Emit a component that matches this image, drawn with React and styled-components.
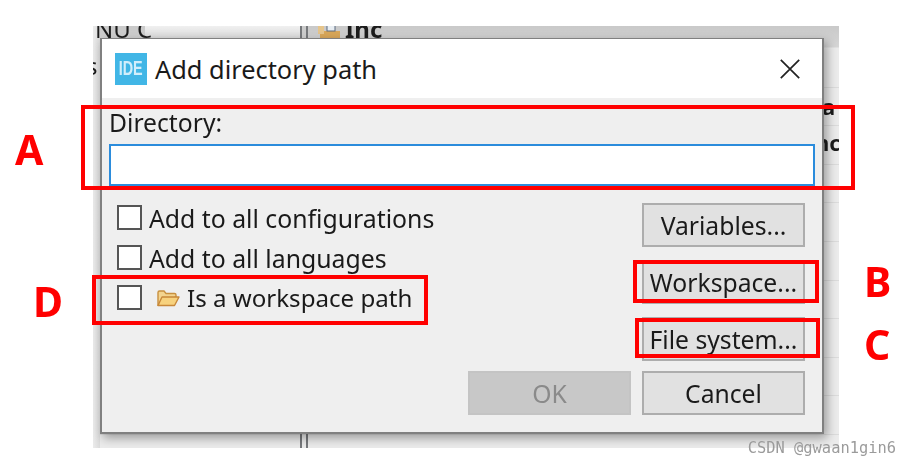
import React from "react";
import styled, { createGlobalStyle } from "styled-components";

const GlobalStyle = createGlobalStyle`
  html, body {
    margin: 0;
    padding: 0;
    background: #fff;
  }
  body {
    width: 910px;
    height: 468px;
    overflow: hidden;
    font-family: "Noto Sans", "Open Sans", sans-serif;
  }
`;

const CheckRow = ({ children }) => (
  <Check>
    <Box type="checkbox" />
    {children}
  </Check>
);

const FolderIcon = () => (
  <svg width="25" height="20" viewBox="0 0 25 20">
    <path d="M2 17V4.500C2 3.600 2.600 3 3.500 3H8l2 2.500h8.500c.8 0 1.500.6 1.500 1.500v2z" fill="#f3d48f" stroke="#c8903f" strokeWidth="1.400" />
    <path d="M2 17.500 6 9h17l-4.500 8.500z" fill="#f7d27e" stroke="#c8883a" strokeWidth="1.400" strokeLinejoin="round" />
  </svg>
);

const App = () => {
  return (
    <Page>
      <GlobalStyle />
      <Shot>
        <LeftStrip />
        <HeaderCell />
        <Behind $left={2} $top={-13} $size={24}>NU C</Behind>
        <Behind $left={-7} $top={24} $size={24}>s</Behind>
        <TreeIcon viewBox="0 0 24 16" width="24" height="16">
          <rect x="3" y="9" width="20" height="7" fill="#d9a75a" />
          <rect x="10" y="0" width="8" height="9" fill="#e8edf2" stroke="#5a6a80" />
          <rect x="1" y="2" width="6" height="10" fill="#e6c58c" />
        </TreeIcon>
        <Behind $left={252} $top={-13} $size={24} $bold>Inc</Behind>
        <Behind $left={729} $top={66} $size={22} $bold>a</Behind>
        <Behind $left={722} $top={102} $size={22} $bold>nc</Behind>
        <Divider $left={207} />
        <Divider $left={213} />
        <Dialog>
          <TitleBar>
            <Logo><LogoText>IDE</LogoText></Logo>
            <Title>Add directory path</Title>
            <Close>
              <svg width="20" height="20" viewBox="0 0 20 20">
                <path d="M.8.8 19.200 19.200M19.200.8.8 19.200" stroke="#222" strokeWidth="1.700" />
              </svg>
            </Close>
          </TitleBar>
          <Body>
            <Label>Directory:</Label>
            <PathInput />
            <Columns>
              <Options>
                <CheckRow>Add to all configurations</CheckRow>
                <CheckRow>Add to all languages</CheckRow>
                <CheckRow>
                  <FolderSlot><FolderIcon /></FolderSlot>
                  <WorkspaceText>Is a workspace path</WorkspaceText>
                </CheckRow>
              </Options>
              <SideButtons>
                <Button>Variables...</Button>
                <Button>Workspace...</Button>
                <Button>File system...</Button>
              </SideButtons>
            </Columns>
            <Footer>
              <Button disabled>OK</Button>
              <Button>Cancel</Button>
            </Footer>
          </Body>
        </Dialog>
      </Shot>

      <Mark $left={81} $top={105} $width={774} $height={85} />
      <Mark $left={633} $top={260} $width={186} $height={43} />
      <Mark $left={635} $top={318} $width={185} $height={40} />
      <Mark $left={92} $top={275} $width={336} $height={50} />

      <Letter $left={15} $top={124}>A</Letter>
      <Letter $left={864} $top={256}>B</Letter>
      <Letter $left={864} $top={319}>C</Letter>
      <Letter $left={33} $top={276}>D</Letter>

      <Watermark>CSDN @gwaan1gin6</Watermark>
    </Page>
  );
};

export default App;

const Page = styled.div`
  position: relative;
  width: 910px;
  height: 468px;
  padding: 26px 0 0 93px;
  box-sizing: border-box;
  background: #fff;
`;

const Shot = styled.div`
  position: relative;
  width: 746px;
  height: 422px;
  box-sizing: border-box;
  padding: 12px 15px 14px 7px;
  overflow: hidden;
  filter: blur(0.35px);
  background:
    linear-gradient(#c9c9c9, #d6d6d6 21px, transparent 22px),
    repeating-linear-gradient(#ececec 0, #ececec 37.6px, #dcdcdc 37.6px, #dcdcdc 38.6px) 0 23px;
`;

const LeftStrip = styled.div`
  position: absolute;
  left: 0;
  top: 0;
  width: 7px;
  height: 100%;
  background: linear-gradient(90deg, #ebebeb, #dcdcdc);
`;

const HeaderCell = styled.div`
  position: absolute;
  left: 52px;
  top: 0;
  width: 155px;
  height: 12px;
  background: linear-gradient(#f0f0f0, #dadada);
`;

const Behind = styled.span`
  position: absolute;
  left: ${(p) => p.$left}px;
  top: ${(p) => p.$top}px;
  font-size: ${(p) => p.$size}px;
  font-weight: ${(p) => (p.$bold ? 700 : 400)};
  color: #1c1c1c;
  line-height: 1.300;
`;

const TreeIcon = styled.svg`
  position: absolute;
  left: 224px;
  top: -4px;
`;

const Divider = styled.i`
  position: absolute;
  left: ${(p) => p.$left}px;
  top: 0;
  width: 2px;
  height: 422px;
  background: #77797c;
`;

const Dialog = styled.div`
  position: relative;
  width: 724px;
  height: 396px;
  box-sizing: border-box;
  display: flex;
  flex-direction: column;
  border: 1px solid #808080;
  border-width: 1px 2px 2px 2px;
  background: #efefef;
  box-shadow: 3px 4px 10px rgba(0, 0, 0, 0.35);
`;

const TitleBar = styled.div`
  display: flex;
  align-items: center;
  height: 59px;
  flex: none;
  padding: 0 22px 0 13px;
  background: #fff;
`;

const Logo = styled.div`
  width: 32px;
  height: 32px;
  display: flex;
  align-items: center;
  justify-content: center;
  background: #41b6e6;
`;

const LogoText = styled.span`
  display: block;
  color: #d2eefb;
  font: 700 20px "Liberation Sans", sans-serif;
  transform: scaleX(0.72);
  filter: blur(0.5px);
`;

const Title = styled.div`
  margin-left: 8px;
  font-size: 25.400px;
  color: #1a1a1a;
`;

const Close = styled.div`
  margin-left: auto;
  display: flex;
`;

const Body = styled.div`
  flex: 1;
  display: flex;
  flex-direction: column;
  padding: 8px 18px 0 7px;
`;

const Label = styled.div`
  font-size: 24.700px;
  line-height: 34px;
  height: 38px;
  color: #1a1a1a;
`;

const PathInput = styled.input`
  width: 706px;
  height: 42px;
  box-sizing: border-box;
  border: 2px solid #2b8cdc;
  background: #fff;
  outline: none;
`;

const Columns = styled.div`
  display: flex;
  justify-content: space-between;
  margin-top: 17px;
`;

const Options = styled.div`
  display: flex;
  flex-direction: column;
  gap: 15px;
  padding: 2px 0 0 8px;
`;

const Check = styled.label`
  display: flex;
  align-items: center;
  height: 25px;
  font-size: 24.800px;
  color: #1a1a1a;
`;

const WorkspaceText = styled.span`
  font-size: 24.100px;
`;

const Box = styled.input`
  appearance: none;
  width: 25px;
  height: 25px;
  margin: 0 7px 0 0;
  box-sizing: border-box;
  border: 2px solid #555;
  background: #fff;
`;

const FolderSlot = styled.span`
  display: flex;
  margin: 0 6px 0 7px;
`;

const SideButtons = styled.div`
  display: flex;
  flex-direction: column;
  gap: 13px;
  margin-right: -1px;
`;

const Button = styled.button`
  width: 163px;
  height: 44px;
  padding: 0;
  box-sizing: border-box;
  border: 2px solid ${(p) => (p.disabled ? "#c4c4c4" : "#adadad")};
  background: ${(p) => (p.disabled ? "#c8c8c8" : "#e1e1e1")};
  color: ${(p) => (p.disabled ? "#8a8a8a" : "#1a1a1a")};
  font-family: inherit;
  font-size: 24.700px;
  white-space: nowrap;
`;

const Footer = styled.div`
  display: flex;
  justify-content: flex-end;
  gap: 11px;
  margin: 10px -1px 0 0;
`;

const Mark = styled.div`
  position: absolute;
  left: ${(p) => p.$left}px;
  top: ${(p) => p.$top}px;
  width: ${(p) => p.$width}px;
  height: ${(p) => p.$height}px;
  box-sizing: border-box;
  border: 4px solid #f00;
`;

const Letter = styled.span`
  position: absolute;
  left: ${(p) => p.$left}px;
  top: ${(p) => p.$top}px;
  font-size: 41px;
  line-height: 50px;
  font-weight: 700;
  color: #f00;
`;

const Watermark = styled.span`
  position: absolute;
  right: 14px;
  top: 439px;
  font: 15.400px "DejaVu Sans Mono", monospace;
  color: #9b9b9b;
  white-space: nowrap;
`;
